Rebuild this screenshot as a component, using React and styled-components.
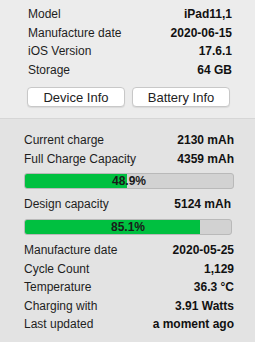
import styled, { createGlobalStyle } from 'styled-components'

const GlobalStyle = createGlobalStyle`
  html, body {
    margin: 0;
    padding: 0;
    background: #e3e3e3;
  }
  body {
    font-family: 'Liberation Sans', Arial, sans-serif;
    font-size: 12px;
    color: #1c1c1c;
  }
`

const Window = styled.div`
  width: 255px;
  height: 342px;
  display: flex;
  flex-direction: column;
  overflow: hidden;
`

const TopPanel = styled.section`
  background: #ececec;
  border-bottom: 1px solid #d6d6d6;
  padding: 5px 23px 11px 28px;
  display: flex;
  flex-direction: column;
`

const BottomPanel = styled.section`
  flex: 1;
  background: #e3e3e3;
  padding: 12px 21px 0 24px;
  display: flex;
  flex-direction: column;
`

const Row = styled.div`
  display: flex;
  justify-content: space-between;
  align-items: center;
  height: 18.5px;
  padding-right: ${(p) => p.$inset || 0}px;
`

const Label = styled.span`
  color: #1e1e1e;
`

const Value = styled.span`
  font-weight: bold;
  color: #111;
`

const Buttons = styled.div`
  display: flex;
  gap: 7px;
  margin-top: 8px;
  margin-left: -1px;
`

const Button = styled.button`
  width: 98px;
  height: 20px;
  padding: 0;
  background: #fff;
  border: 1px solid #c8c8c8;
  border-radius: 4px;
  box-shadow: 0 1px 1px rgba(0, 0, 0, 0.08);
  font-family: 'Liberation Sans', Arial, sans-serif;
  font-size: 13px;
  color: #222;
`

const Bar = styled.div`
  position: relative;
  height: 16px;
  margin: ${(p) => p.$mt}px ${(p) => p.$inset || 0}px ${(p) => p.$mb}px 0;
  background: #d2d2d2;
  border: 1px solid #b9b9b9;
  border-radius: 3px;
  box-sizing: border-box;
  overflow: hidden;
`

const Fill = styled.div`
  height: 100%;
  background: #00c040;
`

const BarText = styled.span`
  position: absolute;
  inset: 0;
  display: flex;
  align-items: center;
  justify-content: center;
  font-weight: bold;
  font-size: 12px;
  color: #1a1a1a;
`

const device = [
  ['Model', 'iPad11,1'],
  ['Manufacture date', '2020-06-15'],
  ['iOS Version', '17.6.1'],
  ['Storage', '64 GB'],
]

const details = [
  ['Manufacture date', '2020-05-25'],
  ['Cycle Count', '1,129'],
  ['Temperature', '36.3 °C'],
  ['Charging with', '3.91 Watts'],
  ['Last updated', 'a moment ago'],
]

function Meter({ pct, mt, mb, inset }) {
  return (
    <Bar $mt={mt} $mb={mb} $inset={inset}>
      <Fill style={{ width: `${pct}%` }} />
      <BarText>{pct}%</BarText>
    </Bar>
  )
}

export default function App() {
  return (
    <Window>
      <GlobalStyle />
      <TopPanel>
        {device.map(([k, v]) => (
          <Row key={k}>
            <Label>{k}</Label>
            <Value>{v}</Value>
          </Row>
        ))}
        <Buttons>
          <Button>Device Info</Button>
          <Button>Battery Info</Button>
        </Buttons>
      </TopPanel>
      <BottomPanel>
        <Row>
          <Label>Current charge</Label>
          <Value>2130 mAh</Value>
        </Row>
        <Row>
          <Label>Full Charge Capacity</Label>
          <Value>4359 mAh</Value>
        </Row>
        <Meter pct={48.9} mt={5} mb={5.5} />
        <Row $inset={3}>
          <Label>Design capacity</Label>
          <Value>5124 mAh</Value>
        </Row>
        <Meter pct={85.1} mt={5.5} mb={6.5} inset={2} />
        {details.map(([k, v]) => (
          <Row key={k}>
            <Label>{k}</Label>
            <Value>{v}</Value>
          </Row>
        ))}
      </BottomPanel>
    </Window>
  )
}
